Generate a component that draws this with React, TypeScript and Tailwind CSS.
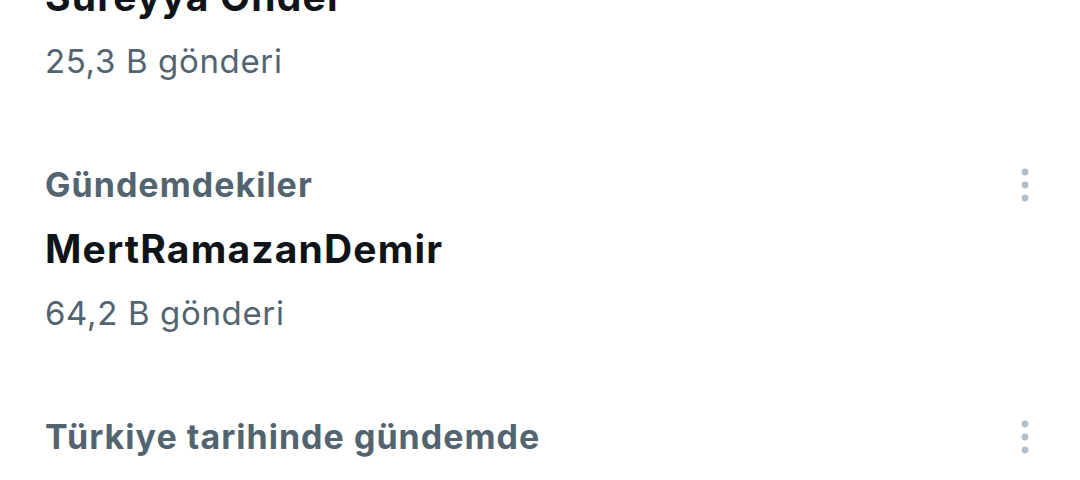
const trends = [
  { label: "Gündemdekiler", title: "Süreyya Önder", count: "25,3 B gönderi" },
  { label: "Gündemdekiler", title: "MertRamazanDemir", count: "64,2 B gönderi" },
  { label: "Türkiye tarihinde gündemde", title: "", count: "" },
];

function MoreIcon() {
  return (
    <svg width="14" height="40" viewBox="0 0 14 40" className="text-[#b3bfc8]">
      <circle cx="7" cy="7" r="3.4" fill="currentColor" />
      <circle cx="7" cy="20" r="3.4" fill="currentColor" />
      <circle cx="7" cy="33" r="3.4" fill="currentColor" />
    </svg>
  );
}

export default function App() {
  return (
    <div
      className="h-[480px] w-[1080px] overflow-hidden bg-white"
      style={{ fontFamily: "Inter, 'Noto Sans', sans-serif" }}
    >
      <div className="-mt-[128px]">
        {trends.map((t, i) => (
          <div key={i} className="py-[41px] pl-[45px] pr-[48px]">
            <div className="flex items-center justify-between">
              <span className="text-[34px] font-bold leading-[40px] tracking-[0.03em] text-[#536471]">
                {t.label}
              </span>
              <MoreIcon />
            </div>
            {t.title && (
              <p className="mt-[20px] text-[39px] font-bold leading-[48px] tracking-[0.03em] text-[#0f1419]">
                {t.title}
              </p>
            )}
            {t.count && (
              <p className="mt-[18px] text-[33px] leading-[44px] tracking-[0.02em] text-[#536471]">
                {t.count}
              </p>
            )}
          </div>
        ))}
      </div>
    </div>
  );
}
